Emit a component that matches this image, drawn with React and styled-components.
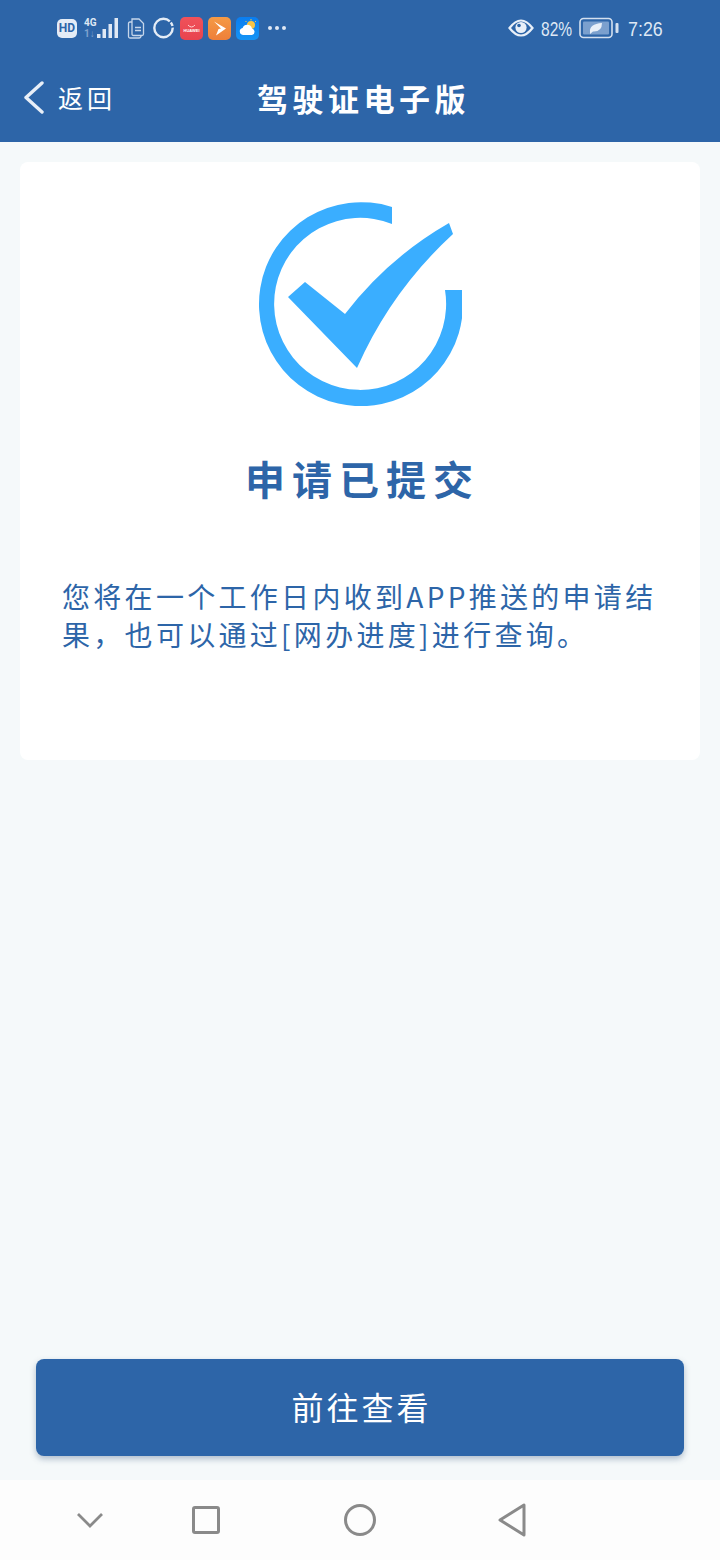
import React from 'react';
import styled, { createGlobalStyle } from 'styled-components';

const GlobalStyle = createGlobalStyle`
    html, body {
        margin: 0;
        padding: 0;
        background: #f5f9fa;
    }
    * {
        box-sizing: border-box;
    }
`;

const Page = styled.div`
    width: 720px;
    height: 1560px;
    display: flex;
    flex-direction: column;
    background: #f5f9fa;
    font-family: "Noto Sans CJK SC", "Noto Sans", sans-serif;
    color: #2d65a8;
`;

const Header = styled.header`
    height: 142px;
    flex: none;
    background: #2d65a8;
    color: #fff;
`;

const StatusBar = styled.div`
    height: 56px;
    padding: 0 57px;
    display: flex;
    align-items: center;
    justify-content: space-between;
`;

const StatusGroup = styled.div`
    display: flex;
    align-items: center;
    gap: ${(p) => p.$gap || 5}px;
`;

const HdBadge = styled.span`
    width: 20px;
    height: 19px;
    border-radius: 5px;
    background: #e4ecf6;
    color: #2d65a8;
    font: 700 12px/19px "Roboto", sans-serif;
    text-align: center;
`;

const NetworkStack = styled.div`
    width: 34px;
    height: 22px;
    margin: 0 4px 0 2px;
    display: flex;
    align-items: flex-end;
    justify-content: space-between;
`;

const NetworkText = styled.div`
    width: 13px;
    display: flex;
    flex-direction: column;
    font: 700 10px/11px "Roboto", sans-serif;
    color: #dfe8f4;
`;

const NetworkSub = styled.span`
    color: #7fa2cf;
`;

const AppTile = styled.div`
    width: 23px;
    height: 23px;
    border-radius: 5px;
    display: flex;
    flex-direction: column;
    align-items: center;
    justify-content: center;
    background: ${(p) => p.$bg};
    overflow: hidden;
`;

const HuaweiText = styled.span`
    font: 700 4px/1 "Liberation Sans", sans-serif;
    color: #fff;
    white-space: nowrap;
`;

const Dots = styled.div`
    margin-left: 4px;
    display: flex;
    gap: 3px;
`;

const Dot = styled.i`
    width: 4px;
    height: 4px;
    border-radius: 50%;
    background: #dfe8f4;
`;

const StatusText = styled.span`
    display: block;
    width: ${(p) => p.$width}px;
    margin-left: ${(p) => p.$offset || 0}px;
    font: 400 21px/1 "Liberation Sans", sans-serif;
    color: #dfe8f4;
    white-space: nowrap;
    transform: scaleX(${(p) => p.$squeeze});
    transform-origin: left center;
`;

const NavBar = styled.div`
    height: 86px;
    padding: 0 24px 3px;
    display: grid;
    grid-template-columns: 1fr auto 1fr;
    align-items: center;
`;

const BackLink = styled.div`
    display: flex;
    align-items: center;
    gap: 12px;
`;

const BackText = styled.span`
    font-size: 25px;
    line-height: 1;
    letter-spacing: 4px;
`;

const NavTitle = styled.h1`
    margin: 0 0 0 7px;
    font-size: 31px;
    font-weight: 700;
    line-height: 1;
    letter-spacing: 4.5px;
`;

const Main = styled.main`
    flex: 1;
    padding: 20px 20px 0;
`;

const Card = styled.section`
    height: 598px;
    padding: 40px 42px 0;
    border-radius: 8px;
    background: #fff;
    display: flex;
    flex-direction: column;
    align-items: center;
`;

const CardTitle = styled.h2`
    margin: 48px 0 0 5px;
    font-size: 40px;
    font-weight: 700;
    line-height: 48px;
    letter-spacing: 7px;
    color: #2d65a8;
`;

const Message = styled.p`
    width: 596px;
    margin: 75px 0 0;
    font-size: 28px;
    font-weight: 400;
    line-height: 38px;
    letter-spacing: 3.3px;
    color: #2d65a8;
`;

const Footer = styled.div`
    flex: none;
    padding: 0 36px 24px;
`;

const ActionButton = styled.button`
    width: 100%;
    height: 97px;
    padding: 0 0 3px 3px;
    border: 0;
    border-radius: 8px;
    background: #2d65a8;
    box-shadow: 0 3px 6px rgba(45, 80, 120, 0.35);
    color: #fff;
    font-family: inherit;
    font-size: 32px;
    line-height: 1;
    letter-spacing: 3px;
`;

const SystemNav = styled.nav`
    height: 80px;
    flex: none;
    background: #fdfdfd;
    display: grid;
    grid-template-columns: 180px 52px 256px 48px;
    align-items: center;
    justify-items: center;
`;

const CheckIcon = () => (
    <svg width="204" height="204" viewBox="0 0 204 204">
        <path
            fill="#3aaeff"
            d="M134 5A102 102 0 1 0 204 88L187 88A86 86 0 1 1 134 22Z"
        />
        <path
            fill="#3aaeff"
            d="M30 95L47 80L87 112Q130 56 191 21L195 32Q133 89 99 166Z"
        />
    </svg>
);

const BackIcon = () => (
    <svg width="22" height="36" viewBox="0 0 22 36">
        <path d="M18 3L2 17.5L18 32" fill="none" stroke="#e8eff8" strokeWidth="3.4" strokeLinecap="round" strokeLinejoin="round" />
    </svg>
);

const SignalIcon = () => (
    <svg width="21" height="22" viewBox="0 0 21 22">
        <g fill="#dfe8f4">
            <rect x="0" y="17" width="3.5" height="4" />
            <rect x="5.5" y="12" width="3.5" height="9" />
            <rect x="11.5" y="7" width="3.5" height="14" />
            <rect x="17.5" y="1" width="3.5" height="20" />
        </g>
    </svg>
);

const DocsIcon = () => (
    <svg width="21" height="21" viewBox="0 0 21 21">
        <g fill="none" stroke="#c6d6ea" strokeWidth="1.3">
            <path d="M5 1H12L16.5 5.5V16Q16.5 17.5 15 17.5H6.5Q5 17.5 5 16Z" />
            <path d="M5 4H3Q1.5 4 1.5 5.5V18.5Q1.5 20 3 20H12Q14 20 14 17.5" />
            <path d="M8 9.5H14M8 12.5H14" />
        </g>
    </svg>
);

const RingIcon = () => (
    <svg width="22" height="22" viewBox="0 0 22 22">
        <circle cx="10.5" cy="11" r="9.2" fill="none" stroke="#e4ecf6" strokeWidth="2.4" strokeDasharray="50 1.5 4 1.5" />
    </svg>
);

const HuaweiArc = () => (
    <svg width="9" height="5" viewBox="0 0 9 5">
        <path d="M1 1Q4.5 5 8 1" fill="none" stroke="#ffd5d5" strokeWidth="1" />
    </svg>
);

const PlayTileIcon = () => (
    <svg width="15" height="17" viewBox="0 0 15 17">
        <path d="M2 1.5L14 8.5L4 15.5L6.5 9L9 8.5Z" fill="#fff" />
    </svg>
);

const WeatherTileIcon = () => (
    <svg width="20" height="18" viewBox="0 0 20 18">
        <circle cx="13" cy="6" r="4" fill="#f6c445" />
        <path d="M13 0V1.5M18 2L17 3M7.5 2L8.5 3" stroke="#f6c445" strokeWidth="1" />
        <path d="M5 16A3.6 3.6 0 0 1 4.6 8.9A5 5 0 0 1 14 9.4A3.4 3.4 0 0 1 14 16Z" fill="#fff" />
    </svg>
);

const EyeIcon = () => (
    <svg width="26" height="18" viewBox="0 0 26 18">
        <path d="M1.5 9Q13 -6 24.5 9Q13 24 1.5 9Z" fill="none" stroke="#e8eff8" strokeWidth="2.2" />
        <circle cx="13" cy="8.5" r="5.6" fill="#e8eff8" />
        <circle cx="11" cy="6.5" r="1.8" fill="#2d65a8" />
    </svg>
);

const BatteryIcon = () => (
    <svg width="40" height="22" viewBox="0 0 40 22">
        <rect x="1" y="1.5" width="32" height="19" rx="3.5" fill="none" stroke="#d4e0ef" strokeWidth="1.6" />
        <rect x="4" y="4.5" width="26" height="13" rx="1" fill="#7ba0ce" />
        <path d="M11 15Q10 7 23 6Q23 15 14 14.5L11 17Z" fill="#e8eff8" />
        <rect x="36.5" y="6" width="3" height="10" rx="1" fill="#d4e0ef" />
    </svg>
);

const NavChevron = () => (
    <svg width="28" height="16" viewBox="0 0 28 16">
        <path d="M2 2L14 14L26 2" fill="none" stroke="#8a8a8a" strokeWidth="2.8" />
    </svg>
);

const NavSquare = () => (
    <svg width="28" height="28" viewBox="0 0 28 28">
        <rect x="1.5" y="1.5" width="25" height="25" rx="1.5" fill="none" stroke="#8a8a8a" strokeWidth="3" />
    </svg>
);

const NavCircle = () => (
    <svg width="32" height="32" viewBox="0 0 32 32">
        <circle cx="16" cy="16" r="14.5" fill="none" stroke="#8a8a8a" strokeWidth="3" />
    </svg>
);

const NavTriangle = () => (
    <svg width="28" height="34" viewBox="0 0 28 34">
        <path d="M26 2V32L2 17Z" fill="none" stroke="#8a8a8a" strokeWidth="3" strokeLinejoin="round" />
    </svg>
);

const App = () => (
    <Page>
        <GlobalStyle />
        <Header>
            <StatusBar>
                <StatusGroup>
                    <HdBadge>HD</HdBadge>
                    <NetworkStack>
                        <NetworkText>
                            <span>4G</span>
                            <NetworkSub>1↓</NetworkSub>
                        </NetworkText>
                        <SignalIcon />
                    </NetworkStack>
                    <DocsIcon />
                    <RingIcon />
                    <AppTile $bg="linear-gradient(#f0525a, #e8434f)">
                        <HuaweiArc />
                        <HuaweiText>HUAWEI</HuaweiText>
                    </AppTile>
                    <AppTile $bg="linear-gradient(#f59a45, #ee7f3a)">
                        <PlayTileIcon />
                    </AppTile>
                    <AppTile $bg="linear-gradient(#0a7df0, #1594f5)">
                        <WeatherTileIcon />
                    </AppTile>
                    <Dots>
                        <Dot />
                        <Dot />
                        <Dot />
                    </Dots>
                </StatusGroup>
                <StatusGroup $gap={7}>
                    <EyeIcon />
                    <StatusText $width={31} $squeeze={0.74}>82%</StatusText>
                    <BatteryIcon />
                    <StatusText $width={35} $offset={2} $squeeze={0.85}>7:26</StatusText>
                </StatusGroup>
            </StatusBar>
            <NavBar>
                <BackLink>
                    <BackIcon />
                    <BackText>返回</BackText>
                </BackLink>
                <NavTitle>驾驶证电子版</NavTitle>
            </NavBar>
        </Header>
        <Main>
            <Card>
                <CheckIcon />
                <CardTitle>申请已提交</CardTitle>
                <Message>您将在一个工作日内收到APP推送的申请结果，也可以通过[网办进度]进行查询。</Message>
            </Card>
        </Main>
        <Footer>
            <ActionButton>前往查看</ActionButton>
        </Footer>
        <SystemNav>
            <NavChevron />
            <NavSquare />
            <NavCircle />
            <NavTriangle />
        </SystemNav>
    </Page>
);

export default App;
